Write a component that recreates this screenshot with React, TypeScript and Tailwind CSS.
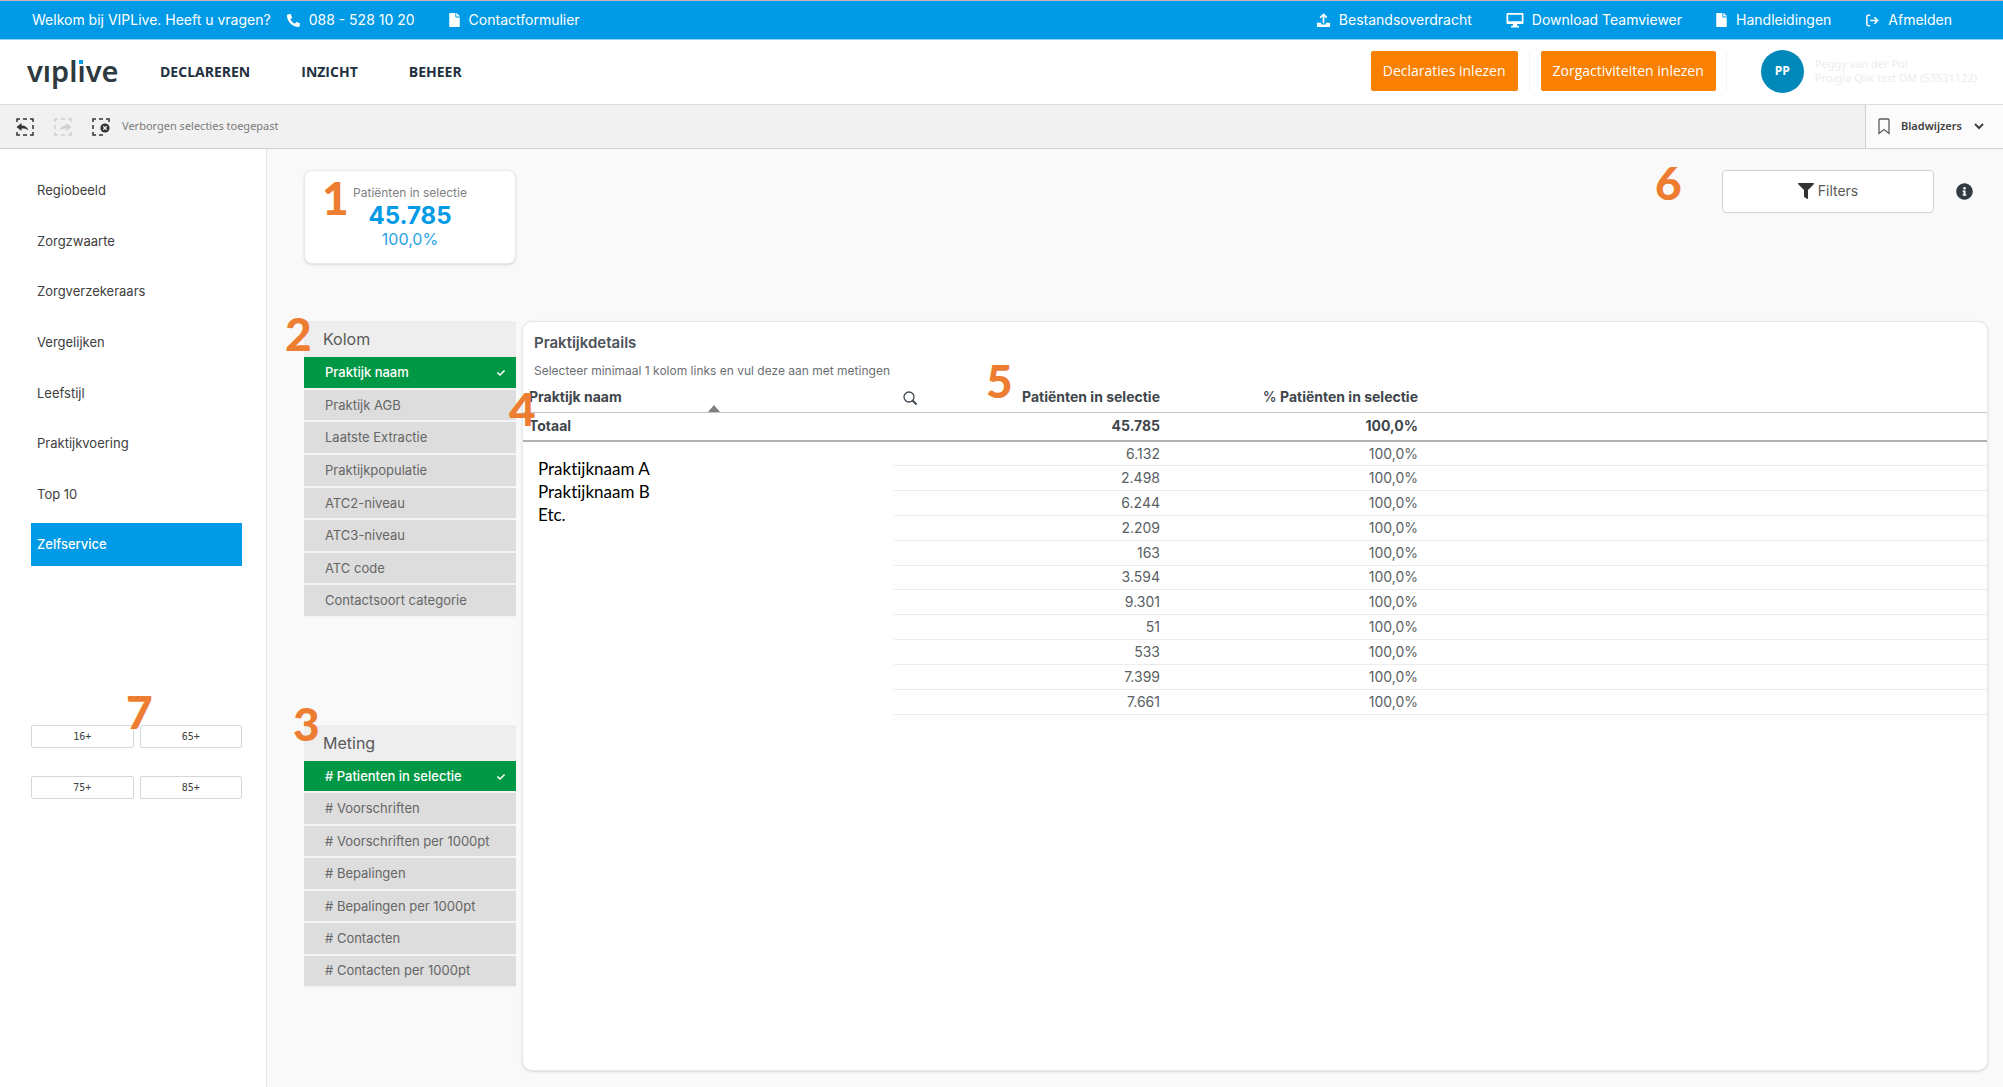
import { FaCheck, FaFile, FaFilter, FaInfoCircle, FaPhoneAlt } from "react-icons/fa";

const sidebarItems = [
  "Regiobeeld",
  "Zorgzwaarte",
  "Zorgverzekeraars",
  "Vergelijken",
  "Leefstijl",
  "Praktijkvoering",
  "Top 10",
  "Zelfservice",
];

const ages = ["16+", "65+", "75+", "85+"];

const columns = [
  "Praktijk naam",
  "Praktijk AGB",
  "Laatste Extractie",
  "Praktijkpopulatie",
  "ATC2-niveau",
  "ATC3-niveau",
  "ATC code",
  "Contactsoort categorie",
];

const measures = [
  "# Patienten in selectie",
  "# Voorschriften",
  "# Voorschriften per 1000pt",
  "# Bepalingen",
  "# Bepalingen per 1000pt",
  "# Contacten",
  "# Contacten per 1000pt",
];

const counts = ["6.132", "2.498", "6.244", "2.209", "163", "3.594", "9.301", "51", "533", "7.399", "7.661"];

function Marker({ n, className }: { n: number; className: string }) {
  return (
    <span
      className={`pointer-events-none absolute z-10 font-[Lato,sans-serif] text-[46px] leading-[46px] font-black text-[#ed7d31] ${className}`}
    >
      {n}
    </span>
  );
}

function UploadIcon() {
  return (
    <svg viewBox="0 0 16 16" className="h-[15px] w-[15px]" fill="none" stroke="currentColor" strokeWidth="1.8">
      <path d="M8 11V2M4.5 5 8 1.5 11.5 5" />
      <path d="M1 10.5h4.5v1.7h5v-1.7H15V15H1z" fill="currentColor" stroke="none" />
    </svg>
  );
}

function MonitorIcon() {
  return (
    <svg viewBox="0 0 18 16" className="h-4 w-[18px]" fill="currentColor">
      <path
        fillRule="evenodd"
        d="M1.5 1h15c.6 0 1 .4 1 1v9c0 .6-.4 1-1 1h-15c-.6 0-1-.4-1-1V2c0-.6.4-1 1-1zm.7 1.7v6.6h13.6V2.700z"
      />
      <path d="M7 12h4l.4 2H13v1.500H5V14h1.600z" />
    </svg>
  );
}

function LogoutIcon() {
  return (
    <svg viewBox="0 0 16 16" className="h-[15px] w-[15px]" fill="none" stroke="currentColor" strokeWidth="1.6">
      <path d="M5.500 2.500H3.500Q2 2.500 2 4v8q0 1.500 1.500 1.500h2" />
      <path d="M5.500 8H13M10 4.500 13.500 8 10 11.500" />
    </svg>
  );
}

function SelectionFrame({ kind }: { kind: "back" | "forward" | "clear" }) {
  return (
    <svg viewBox="0 0 18 18" className="h-[18px] w-[18px]" fill="none" stroke="currentColor" strokeWidth="1.5">
      <path d="M1 4V1h3M7 1h4M14 1h3v3M1 14v3h3M7 17h4" />
      {kind === "back" && <path d="M17 7v4M14 17h3v-3" />}
      {kind === "forward" && <path d="M1 7v4M14 17h3v-3" />}
      {kind === "clear" && <path d="M1 7v4" />}
      {kind === "back" && (
        <path d="M0.500 9 5.500 5v2.500c4 0 6.300 2 6.800 5C10.500 10.800 8.500 10.500 5.500 10.500V13z" fill="currentColor" stroke="none" />
      )}
      {kind === "forward" && (
        <path d="M17.500 9 12.500 5v2.500c-4 0-6.300 2-6.800 5 1.800-1.700 3.800-2 6.800-2V13z" fill="currentColor" stroke="none" />
      )}
      {kind === "clear" && (
        <>
          <circle cx="13" cy="10" r="4.600" fill="currentColor" stroke="none" />
          <path d="m11.300 8.300 3.400 3.400m0-3.400-3.400 3.400" stroke="#f1f1f1" strokeWidth="1.300" />
        </>
      )}
    </svg>
  );
}

function SelectList({ title, items, className }: { title: string; items: string[]; className: string }) {
  return (
    <section aria-label={title}>
      <h2 className="flex h-9 items-center bg-[#eeeeee] pl-[19px] text-base leading-5 text-[#595959]">{title}</h2>
      <ul className={`flex flex-col ${className}`}>
        {items.map((item, i) => (
          <li key={item} className="flex-1 border-b-2 border-[#f4f4f4]">
            <button
              className={
                i === 0
                  ? "flex h-full w-full items-center justify-between bg-[#009845] pt-px pr-[11px] pl-[21px] text-[13px] font-medium text-white"
                  : "flex h-full w-full items-center justify-between bg-[#dddddd] pt-px pr-[11px] pl-[21px] text-[13px] text-[#666666]"
              }
            >
              {item}
              {i === 0 && <FaCheck className="h-2 w-2" />}
            </button>
          </li>
        ))}
      </ul>
    </section>
  );
}

export default function App() {
  return (
    <div className="flex min-h-screen flex-col bg-[#f9f9f9] font-[Inter,sans-serif]">
      <div className="flex h-10 items-center justify-between border-t border-b border-t-[#c9b3bb] border-b-[#8fd2f5] bg-[#009ae6] pr-[51px] pl-8 text-sm text-white">
        <div className="flex items-center">
          <span>Welkom bij VIPLive. Heeft u vragen?</span>
          <a href="#telefoon" className="ml-4 flex items-center gap-[9px]">
            <FaPhoneAlt className="h-[13px] w-[13px]" />
            088 - 528 10 20
          </a>
          <a href="#contact" className="ml-[34px] flex items-center gap-[9px]">
            <FaFile className="h-[14px] w-[11px]" />
            Contactformulier
          </a>
        </div>
        <div className="flex items-center gap-[34px]">
          <a href="#bestandsoverdracht" className="flex items-center gap-2">
            <UploadIcon />
            Bestandsoverdracht
          </a>
          <a href="#teamviewer" className="flex items-center gap-2">
            <MonitorIcon />
            Download Teamviewer
          </a>
          <a href="#handleidingen" className="flex items-center gap-[9px]">
            <FaFile className="h-[14px] w-[11px]" />
            Handleidingen
          </a>
          <a href="#afmelden" className="flex items-center gap-2">
            <LogoutIcon />
            Afmelden
          </a>
        </div>
      </div>

      <header className="flex h-16 items-center justify-between bg-white pr-[26px] pb-[2px] pl-[27px] font-[Open_Sans,sans-serif]">
        <div className="flex items-center">
          <a
            href="#home"
            aria-label="viplive"
            className="w-[90px] font-[Noto_Sans,sans-serif] text-[29px] leading-8 font-semibold text-[#2d3a40]"
          >
            vıpl
            <span className="relative">
              ı<span className="absolute top-[9px] left-[2px] h-1 w-1 bg-[#009ae6]" />
            </span>
            ve
          </a>
          <nav className="ml-[43px] flex gap-[51px] pt-px text-sm font-bold text-[#22303f]">
            <a href="#declareren">DECLAREREN</a>
            <a href="#inzicht">INZICHT</a>
            <a href="#beheer">BEHEER</a>
          </nav>
        </div>
        <div className="flex items-center">
          <button className="h-10 rounded-xs bg-[#f98000] px-3 text-sm text-white">Declaraties inlezen</button>
          <span className="mx-[11px] h-10 w-px bg-[#f4f4f4]" />
          <button className="h-10 rounded-xs bg-[#f98000] px-3 text-sm text-white">Zorgactiviteiten inlezen</button>
          <span className="ml-[10px] h-10 w-px bg-[#f4f4f4]" />
          <span className="ml-[34px] flex h-[43px] w-[43px] items-center justify-center rounded-full bg-[#0088b9] text-xs font-bold text-white">
            PP
          </span>
          <span className="ml-[11px] font-[Noto_Sans,sans-serif] text-[11px] leading-[14px] text-[#ececec]">
            Peggy van der Pol
            <br />
            Proigia Qlik test DM (53531122)
          </span>
        </div>
      </header>

      <div className="flex h-[45px] justify-between border-t border-b border-t-[#dcdcdc] border-b-[#d0d0d0] bg-[#f1f1f1] font-[Noto_Sans,sans-serif]">
        <div className="flex items-center pl-4 text-[#333333]">
          <button aria-label="Stap terug">
            <SelectionFrame kind="back" />
          </button>
          <button aria-label="Stap vooruit" className="ml-5 text-[#cfcfcf]">
            <SelectionFrame kind="forward" />
          </button>
          <button aria-label="Selecties wissen" className="ml-5">
            <SelectionFrame kind="clear" />
          </button>
          <span className="ml-3 text-[11px] text-[#7a7a7a]">Verborgen selecties toegepast</span>
        </div>
        <button className="flex w-[138px] items-center border-l border-[#d0d0d0] bg-[#fbfbfb] pl-3 text-[11px] font-semibold text-[#404040]">
          <svg viewBox="0 0 12 17" className="h-[17px] w-3" fill="none" stroke="#595959" strokeWidth="1.300">
            <path d="M1 15.500V2q0-1 1-1h8q1 0 1 1v13.500L6 11.500z" />
          </svg>
          <span className="ml-[11px]">Bladwijzers</span>
          <svg viewBox="0 0 10 7" className="ml-3 h-[7px] w-[10px]" fill="none" stroke="#404040" strokeWidth="2">
            <path d="m1 1 4 4 4-4" />
          </svg>
        </button>
      </div>

      <div className="flex flex-1">
        <aside className="w-[267px] shrink-0 border-r border-[#e6e6e6] bg-white pt-5 pr-6 pl-[31px]">
          <nav className="flex h-[397px] flex-col justify-between text-[13px] text-[#404040]">
            {sidebarItems.map((item) => (
              <a
                key={item}
                href={`#${item}`}
                className={
                  item === "Zelfservice"
                    ? "flex h-[43px] items-center bg-[#009ae6] pt-px pl-[6px] font-medium text-white"
                    : "flex h-[43px] items-center pt-px pl-[6px]"
                }
              >
                {item}
              </a>
            ))}
          </nav>
          <div className="relative mt-[159px] grid grid-cols-2 gap-x-[6px] gap-y-7">
            <Marker n={7} className="-top-9 left-[95px]" />
            {ages.map((age) => (
              <button
                key={age}
                className="h-[23px] rounded-xs border border-[#d6d6d6] bg-white font-[DejaVu_Sans_Mono,monospace] text-[10px] text-[#404040]"
              >
                {age}
              </button>
            ))}
          </div>
        </aside>

        <main className="flex min-w-0 flex-1 flex-col pt-[21px] pr-[15px] pb-4 pl-[37px]">
          <div className="flex items-start justify-between">
            <section className="relative flex h-[94px] w-[212px] flex-col items-center rounded-lg border border-[#e3eaf0] bg-white pt-[14px] shadow-sm">
              <Marker n={1} className="top-[4px] left-[17px]" />
              <h2 className="text-xs leading-4 text-[#808080]">Patiënten in selectie</h2>
              <p className="text-2xl leading-[30px] font-bold text-[#009ae6]">45.785</p>
              <p className="text-base leading-4 text-[#26a4e8]">100,0%</p>
            </section>
            <div className="relative flex items-center pr-[15px]">
              <Marker n={6} className="-top-[10px] -left-[67px]" />
              <button className="flex h-[43px] w-[212px] items-center justify-center gap-1 rounded-[4px] border border-[#d0d0d0] bg-white pb-[2px] text-sm text-[#595959]">
                <FaFilter className="h-4 w-4 text-[#333333]" />
                Filters
              </button>
              <button aria-label="Informatie" className="ml-[22px] text-[#333a40]">
                <FaInfoCircle className="h-[17px] w-[17px]" />
              </button>
            </div>
          </div>

          <div className="mt-[57px] flex flex-1 gap-[6px]">
            <div className="w-[212px] shrink-0">
              <div className="relative">
                <Marker n={2} className="-top-[10px] -left-[19px]" />
                <SelectList title="Kolom" items={columns} className="h-[261px]" />
              </div>
              <div className="relative mt-[107px]">
                <Marker n={3} className="-top-[24px] -left-[11px]" />
                <SelectList title="Meting" items={measures} className="h-[227px]" />
              </div>
            </div>

            <section className="relative min-w-0 flex-1 rounded-[10px] border border-[#e1eaf0] bg-white shadow-sm">
              <Marker n={4} className="top-[64px] -left-[14px]" />
              <Marker n={5} className="top-[36px] left-[463px]" />
              <h2 className="mt-[11px] ml-[11px] text-[15px] leading-5 font-semibold text-[#4d5359]">Praktijkdetails</h2>
              <p className="mt-[10px] ml-[11px] text-xs leading-4 text-[#6b7075]">
                Selecteer minimaal 1 kolom links en vul deze aan met metingen
              </p>
              <table className="mt-1 w-full table-fixed border-collapse text-sm text-[#595f64]">
                <colgroup>
                  <col className="w-[371px]" />
                  <col className="w-[266px]" />
                  <col className="w-[258px]" />
                  <col />
                </colgroup>
                <thead className="text-[#40464b]">
                  <tr className="h-[29px] border-b border-[#c4c4c4]">
                    <th className="relative p-0 pl-[6px] text-left font-bold">
                      Praktijk naam
                      <span className="absolute bottom-0 left-[185px] border-x-[6px] border-b-[7px] border-x-transparent border-b-[#808080]" />
                      <button aria-label="Zoeken" className="absolute top-2 left-[380px]">
                        <svg viewBox="0 0 14 14" className="h-[14px] w-[14px]" fill="none" stroke="#404a52" strokeWidth="1.300">
                          <circle cx="6" cy="6" r="5" />
                          <path d="m9.500 9.500 4 4" strokeWidth="2" />
                        </svg>
                      </button>
                    </th>
                    <th className="p-0 text-right font-bold">Patiënten in selectie</th>
                    <th className="p-0 text-right font-bold">
                      <span className="font-medium">%</span> Patiënten in selectie
                    </th>
                    <th aria-label="Leeg" />
                  </tr>
                  <tr className="h-[29px] border-b-2 border-[#b0b0b0]">
                    <th className="p-0 pl-[6px] text-left font-bold">Totaal</th>
                    <td className="p-0 text-right font-bold">45.785</td>
                    <td className="p-0 text-right font-bold">100,0%</td>
                    <td />
                  </tr>
                </thead>
                <tbody>
                  {counts.map((count, i) => (
                    <tr key={count} className="h-6">
                      {i === 0 && (
                        <td
                          rowSpan={11}
                          className="h-[273px] p-0 pt-[15px] pl-[15px] align-top font-[Lato,sans-serif] text-[17px] leading-[23px] text-black [font-variant-ligatures:none]"
                        >
                          Praktijknaam A
                          <br />
                          Praktijknaam B
                          <br />
                          Etc.
                        </td>
                      )}
                      <td className="border-b border-[#ececec] p-0 text-right">{count}</td>
                      <td className="border-b border-[#ececec] p-0 text-right">100,0%</td>
                      <td className="border-b border-[#ececec] p-0" />
                    </tr>
                  ))}
                </tbody>
              </table>
            </section>
          </div>
        </main>
      </div>
    </div>
  );
}
